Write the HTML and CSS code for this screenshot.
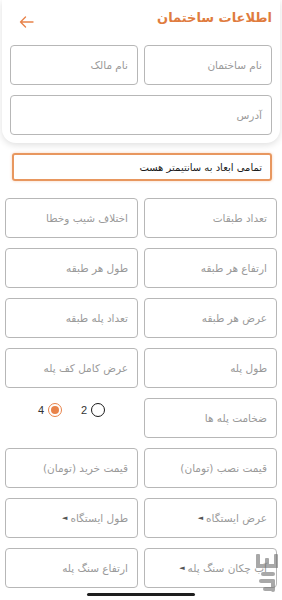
FILE: index.html
```html
<!DOCTYPE html>
<html lang="fa" dir="rtl">
<head>
<meta charset="utf-8">
<title>اطلاعات ساختمان</title>
<link rel="stylesheet" href="styles.css">
</head>
<body>
<div class="screen">
  <header class="card">
    <div class="title-row">
      <h1 class="title">اطلاعات ساختمان</h1>
      <span class="back">
        <svg width="15" height="12" viewBox="0 0 15 12"><path d="M14 6H1.5M6.5 1L1.5 6l5 5" fill="none" stroke="#e8834a" stroke-width="1.4" stroke-linecap="round" stroke-linejoin="round"/></svg>
      </span>
    </div>
    <div class="row2">
      <div class="field">نام ساختمان</div>
      <div class="field">نام مالک</div>
    </div>
    <div class="field address">آدرس</div>
  </header>

  <div class="note">تمامی ابعاد به سانتیمتر هست</div>

  <main class="grid">
    <div class="field">تعداد طبقات</div>
    <div class="field">اختلاف شیب وخطا</div>
    <div class="field">ارتفاع هر طبقه</div>
    <div class="field">طول هر طبقه</div>
    <div class="field">عرض هر طبقه</div>
    <div class="field">تعداد پله طبقه</div>
    <div class="field">طول پله</div>
    <div class="field">عرض کامل کف پله</div>
    <div class="field">ضخامت پله ها</div>
    <div class="radios">
      <label class="opt"><span class="radio"></span><span class="num">2</span></label>
      <label class="opt"><span class="radio on"></span><span class="num">4</span></label>
    </div>
    <div class="field">قیمت نصب (تومان)</div>
    <div class="field">قیمت خرید (تومان)</div>
    <div class="field">عرض ایستگاه <span class="ptr">◄</span></div>
    <div class="field">طول ایستگاه <span class="ptr">◄</span></div>
    <div class="field">آب چکان سنگ پله <span class="ptr">◄</span></div>
    <div class="field">ارتفاع سنگ پله</div>
  </main>

  <div class="watermark">
    <svg width="28" height="42" viewBox="0 0 28 42">
      <g fill="#6f6f6f">
        <rect x="3" y="2" width="4" height="14" rx="1"/>
        <rect x="3" y="12" width="22" height="4" rx="1"/>
        <rect x="21" y="2" width="4" height="14" rx="1"/>
        <rect x="12" y="6" width="4" height="10" rx="1"/>
        <rect x="8" y="20" width="14" height="4" rx="2"/>
        <rect x="6" y="27" width="16" height="4" rx="2"/>
        <rect x="18" y="27" width="4" height="13" rx="2"/>
        <rect x="10" y="35" width="10" height="4" rx="2"/>
      </g>
    </svg>
  </div>
  <div class="home-bar"></div>
</div>
</body>
</html>
```

FILE: styles.css
```css
* { box-sizing: border-box; }
html, body { margin: 0; padding: 0; background: #fff; }
body {
  font-family: "DejaVu Sans", "Noto Sans", sans-serif;
  color: #222;
}
.screen {
  position: relative;
  width: 282px;
  height: 600px;
  overflow: hidden;
  background: #fff;
}
.card {
  margin: 0 2px;
  padding: 4px 8px 8px;
  background: #fff;
  border-radius: 0 0 14px 14px;
  box-shadow: 0 2px 7px rgba(0,0,0,0.13);
}
.title-row {
  display: flex;
  justify-content: space-between;
  align-items: center;
  height: 26px;
}
.title {
  margin: 0;
  font-size: 13px;
  font-weight: bold;
  color: #e07c3e;
}
.back {
  display: flex;
  padding-left: 9px;
  padding-top: 10px;
}
.row2 {
  display: grid;
  grid-template-columns: 1fr 1fr;
  gap: 6px;
  margin-top: 15px;
}
.field {
  height: 40px;
  border: 1px solid #b7b7b7;
  border-radius: 4px;
  display: flex;
  align-items: center;
  padding: 0 9px;
  font-size: 10.5px;
  color: #9a9a9a;
  white-space: nowrap;
  overflow: hidden;
  background: #fff;
}
.address { margin-top: 10px; }
.note {
  margin: 10px 10px 0 12px;
  height: 28px;
  border: 2px solid #e8975f;
  border-radius: 3px;
  box-shadow: 0 0 3px rgba(232,150,95,0.45);
  display: flex;
  align-items: center;
  padding: 0 8px;
  font-size: 10px;
  color: #1c1c1c;
}
.grid {
  display: grid;
  grid-template-columns: 133px 133px;
  column-gap: 6px;
  row-gap: 10px;
  margin: 17px 5px 0 5px;
}
.ptr { font-size: 7px; margin-right: 3px; color: #555; }
.radios {
  display: flex;
  justify-content: center;
  align-items: flex-start;
  gap: 19px;
  padding-top: 5px;
}
.opt {
  display: flex;
  align-items: center;
  gap: 4px;
}
.num { font-size: 11px; color: #333; font-family: "Liberation Sans", sans-serif; }
.radio {
  width: 14px;
  height: 14px;
  border: 1.5px solid #1a1a1a;
  border-radius: 50%;
  display: flex;
  align-items: center;
  justify-content: center;
}
.radio.on { border-color: #e8834a; }
.radio.on::after {
  content: "";
  width: 8px;
  height: 8px;
  border-radius: 50%;
  background: #e8834a;
}
.watermark {
  position: absolute;
  right: 1px;
  bottom: 2px;
  opacity: 0.6;
}
.home-bar {
  position: absolute;
  left: 87px;
  top: 593px;
  width: 108px;
  height: 3px;
  border-radius: 2px;
  background: #1e1e1e;
}
```
